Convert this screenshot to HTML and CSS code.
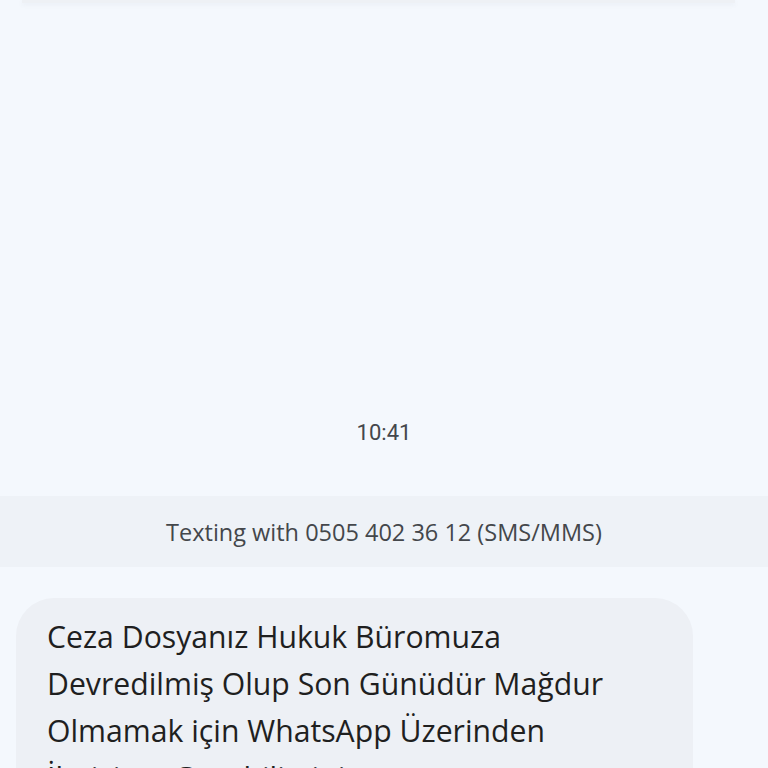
FILE: index.html
```html
<!DOCTYPE html>
<html lang="tr">
<head>
<meta charset="utf-8">
<link rel="stylesheet" href="styles.css">
</head>
<body>
<div class="screen">
  <div class="prev-card"></div>
  <div class="timestamp">10:41</div>
  <div class="band">Texting with 0505 402 36 12 (SMS/MMS)</div>
  <div class="bubble">Ceza Dosyanız Hukuk Büromuza Devredilmiş Olup Son Günüdür Mağdur Olmamak için WhatsApp Üzerinden İletişime Geçebilirsiniz.</div>
</div>
</body>
</html>
```
FILE: styles.css
```css
html, body {
  margin: 0;
  padding: 0;
  background: #f4f8fd;
}
.screen {
  width: 768px;
  height: 768px;
  overflow: hidden;
  display: flex;
  flex-direction: column;
  font-family: "Open Sans", Roboto, sans-serif;
}
.prev-card {
  margin: 0 33px 0 22px;
  height: 3px;
  background: #eef1f5;
  box-shadow: 0 2px 4px rgba(120, 130, 150, 0.08);
  flex: none;
}
.timestamp {
  margin-top: 417px;
  text-align: center;
  font-family: Roboto, sans-serif;
  font-size: 22px;
  line-height: 26px;
  color: #44474b;
}
.band {
  margin-top: 50px;
  height: 71px;
  background: #eef2f7;
  display: flex;
  align-items: center;
  justify-content: center;
  font-size: 23.5px;
  color: #44474b;
  flex: none;
}
.bubble {
  margin: 31px 0 0 16px;
  width: 677px;
  box-sizing: border-box;
  padding: 15px 76px 20px 31px;
  background: #edf0f5;
  border-radius: 38px;
  font-size: 30.2px;
  line-height: 47px;
  color: #1f1f1f;
  flex: none;
}
```
